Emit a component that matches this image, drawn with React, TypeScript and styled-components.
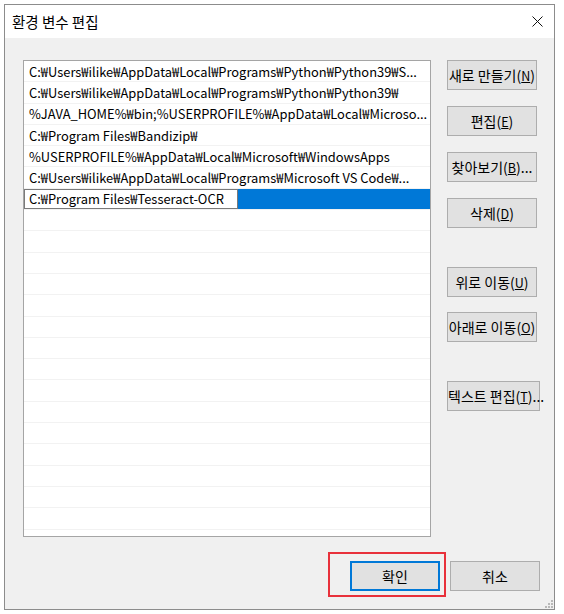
import React from "react";
import styled, { createGlobalStyle } from "styled-components";

const GlobalStyle = createGlobalStyle`
  html, body {
    margin: 0;
    padding: 0;
    background: #ffffff;
  }
  body {
    font-family: "Noto Sans CJK KR", "Noto Sans", sans-serif;
    color: #000;
  }
`;

const Dialog = styled.div`
  position: relative;
  box-sizing: border-box;
  margin: 4px 0 0 4px;
  width: 551px;
  height: 606px;
  border: 1px solid #8c8c8c;
  background: #f0f0f0;
  display: flex;
  flex-direction: column;
`;

const TitleBar = styled.div`
  height: 33px;
  flex: none;
  background: #fff;
  display: flex;
  align-items: center;
  justify-content: space-between;
  padding: 0 11px 0 7px;
  font-size: 14.5px;
`;

const Body = styled.div`
  flex: 1;
  padding: 22px 14px 0 18px;
  display: flex;
  flex-direction: column;
`;

const Main = styled.div`
  display: flex;
  gap: 16px;
  align-items: flex-start;
`;

const ListBox = styled.div`
  box-sizing: border-box;
  width: 410px;
  height: 477px;
  border: 1px solid #a5a5a5;
  background: #fff;
  overflow: hidden;
`;

const Row = styled.div<{ $selected?: boolean }>`
  box-sizing: border-box;
  height: 21.3px;
  display: flex;
  align-items: center;
  border-bottom: 1px solid #f2f2f2;
  background: ${(p) => (p.$selected ? "#0078d7" : "#fff")};
  font-size: 12.9px;
  white-space: nowrap;
  overflow: hidden;
  padding-left: ${(p) => (p.$selected ? "0" : "5px")};
`;

const EditBox = styled.div`
  box-sizing: border-box;
  width: 214px;
  height: 100%;
  background: #fff;
  border: 1px solid #7a7a7a;
  padding-left: 4px;
  display: flex;
  align-items: center;
`;

const Side = styled.div`
  display: flex;
  flex-direction: column;
`;

const Button = styled.button<{ $gap?: number; $wide?: boolean; $default?: boolean }>`
  box-sizing: border-box;
  width: ${(p) => (p.$wide ? "93px" : "90px")};
  height: 30px;
  margin-top: ${(p) => p.$gap ?? 0}px;
  padding: 0;
  background: #e1e1e1;
  border: ${(p) => (p.$default ? "2px solid #0078d7" : "1px solid #adadad")};
  font-family: inherit;
  font-size: 14px;
  color: #000;
  white-space: nowrap;
  u {
    font-size: 12.5px;
    text-decoration: underline;
  }
`;

const Footer = styled.div`
  margin-top: 24px;
  display: flex;
  justify-content: flex-end;
  gap: 10px;
`;

const Marked = styled.span`
  position: relative;
  display: inline-flex;
  &::after {
    content: "";
    position: absolute;
    left: -22px;
    top: -9px;
    right: -6px;
    bottom: -6px;
    border: 2px solid #e8313b;
  }
`;

const Grip = styled.svg`
  position: absolute;
  right: 1px;
  bottom: 1px;
`;

const rows = [
  "C:₩Users₩ilike₩AppData₩Local₩Programs₩Python₩Python39₩S...",
  "C:₩Users₩ilike₩AppData₩Local₩Programs₩Python₩Python39₩",
  "%JAVA_HOME%₩bin;%USERPROFILE%₩AppData₩Local₩Microso...",
  "C:₩Program Files₩Bandizip₩",
  "%USERPROFILE%₩AppData₩Local₩Microsoft₩WindowsApps",
  "C:₩Users₩ilike₩AppData₩Local₩Programs₩Microsoft VS Code₩...",
];

const Mnemonic = ({ text, letter, tail = "" }: { text: string; letter: string; tail?: string }) => (
  <>
    {text}(<u>{letter}</u>){tail}
  </>
);

export default function App() {
  return (
    <>
      <GlobalStyle />
      <Dialog>
        <TitleBar>
          <span>환경 변수 편집</span>
          <svg width="11" height="11" viewBox="0 0 11 11">
            <path d="M0.5 0.5 L10.5 10.5 M10.5 0.5 L0.5 10.5" stroke="#111" strokeWidth="1" />
          </svg>
        </TitleBar>
        <Body>
          <Main>
            <ListBox>
              {rows.map((r) => (
                <Row key={r}>{r}</Row>
              ))}
              <Row $selected>
                <EditBox>C:₩Program Files₩Tesseract-OCR</EditBox>
              </Row>
              {Array.from({ length: 15 }).map((_, i) => (
                <Row key={"e" + i} />
              ))}
            </ListBox>
            <Side>
              <Button>
                <Mnemonic text="새로 만들기" letter="N" />
              </Button>
              <Button $gap={16}>
                <Mnemonic text="편집" letter="E" />
              </Button>
              <Button $gap={16}>
                <Mnemonic text="찾아보기" letter="B" tail="..." />
              </Button>
              <Button $gap={16}>
                <Mnemonic text="삭제" letter="D" />
              </Button>
              <Button $gap={39}>
                <Mnemonic text="위로 이동" letter="U" />
              </Button>
              <Button $gap={15}>
                <Mnemonic text="아래로 이동" letter="O" />
              </Button>
              <Button $gap={39} $wide>
                <Mnemonic text="텍스트 편집" letter="T" tail="..." />
              </Button>
            </Side>
          </Main>
          <Footer>
            <Marked>
              <Button $default>확인</Button>
            </Marked>
            <Button>취소</Button>
          </Footer>
        </Body>
        <Grip width="8" height="8" viewBox="0 0 8 8">
          <rect x="6" y="0" width="2" height="2" fill="#b8b8b8" />
          <rect x="3" y="3" width="2" height="2" fill="#b8b8b8" />
          <rect x="6" y="3" width="2" height="2" fill="#b8b8b8" />
          <rect x="0" y="6" width="2" height="2" fill="#b8b8b8" />
          <rect x="3" y="6" width="2" height="2" fill="#b8b8b8" />
          <rect x="6" y="6" width="2" height="2" fill="#b8b8b8" />
        </Grip>
      </Dialog>
    </>
  );
}
